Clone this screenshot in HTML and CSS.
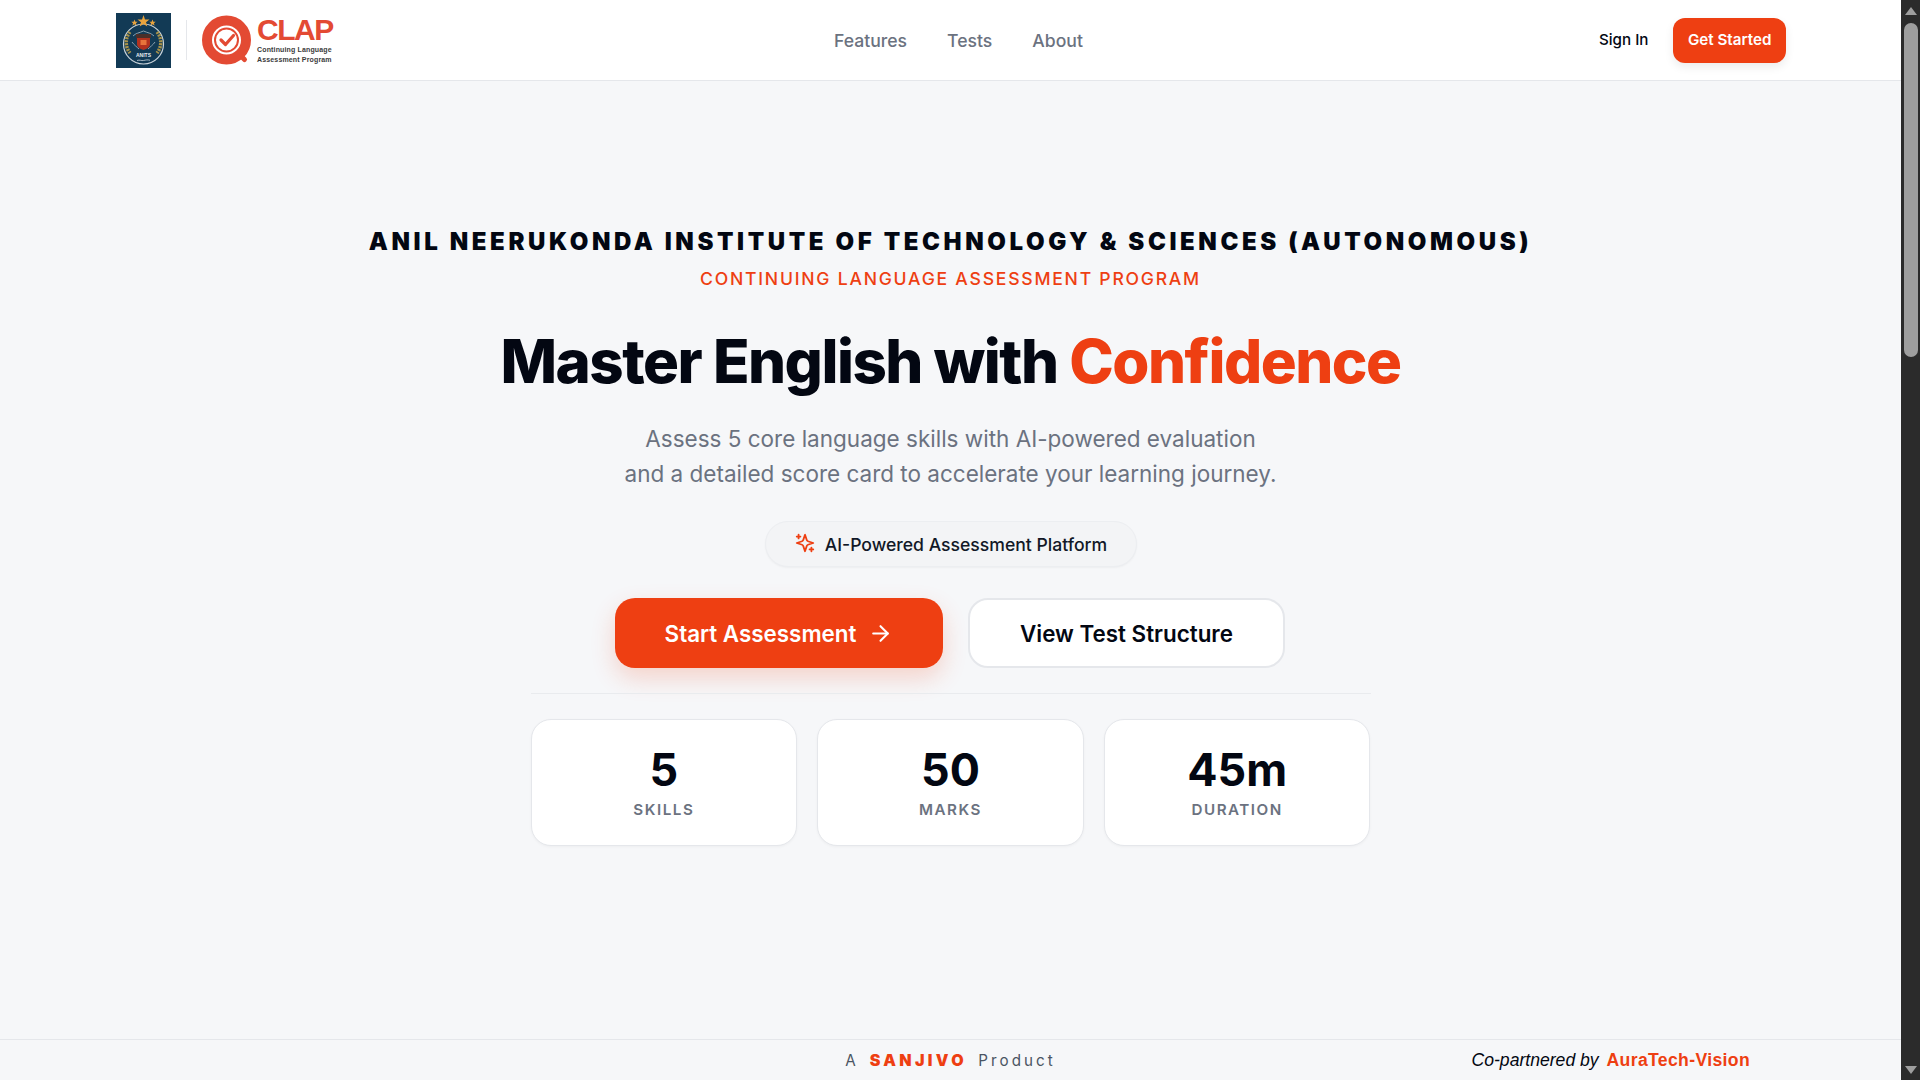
FILE: index.html
```html
<!DOCTYPE html>
<html lang="en">
<head>
    <meta charset="UTF-8">
    <meta name="viewport" content="width=device-width, initial-scale=1.0">
    <title>CLAP</title>
    <link rel="stylesheet" href="styles.css">
</head>
<body>
    <div class="page">
        <header class="topbar">
            <div class="brand">
                <svg class="emblem" width="55" height="55" viewBox="0 0 55 55">
                    <rect width="55" height="55" fill="#123a55"/>
                    <circle cx="27.500" cy="31" r="20" fill="none" stroke="#c9d3da" stroke-width="1.200"/>
                    <polygon points="27.500,2 29,6.500 33.500,6.500 30,9.300 31.300,13.500 27.500,11 23.700,13.500 25,9.300 21.500,6.500 26,6.500" fill="#e8a33d"/>
                    <polygon points="18.500,6.500 19.400,8.700 21.700,8.700 19.900,10.200 20.600,12.500 18.500,11.200 16.400,12.500 17.100,10.200 15.300,8.700 17.600,8.700" fill="#e8a33d"/>
                    <polygon points="36.500,6.500 37.400,8.700 39.700,8.700 37.900,10.200 38.600,12.500 36.500,11.200 34.400,12.500 35.100,10.200 33.300,8.700 35.600,8.700" fill="#e8a33d"/>
                    <path d="M14 19c-5 6-5 15 0 21M41 19c5 6 5 15 0 21" fill="none" stroke="#a8924a" stroke-width="3.500" stroke-dasharray="2 1"/>
                    <path d="M17 23c3-3 6-3 10.500-5 4.500 2 7.500 2 10.500 5M16 29c2 3 5 5 7 7M39 29c-2 3-5 5-7 7" fill="none" stroke="#8aa0ae" stroke-width="1"/>
                    <path d="M20 21h15v4H20z" fill="#4a2f2a"/>
                    <path d="M21 25h13v6c0 3-3 5-6.500 6-3.500-1-6.500-3-6.500-6z" fill="#b2321f"/>
                    <path d="M24.500 27h6v5h-6z" fill="#e8743b"/>
                    <text class="emblem-name" x="27.500" y="44" text-anchor="middle">ANITS</text>
                    <path d="M21 47.500c3-1 4 .5 6.500 0s4-1 6.500-.2" fill="none" stroke="#c9d3da" stroke-width=".8"/>
                </svg>
                <span class="brand-divider"></span>
                <div class="clap-logo">
                    <svg width="50" height="50" viewBox="0 0 50 50">
                        <path d="M37 39l5.500 5.500" stroke="#e34a33" stroke-width="5" stroke-linecap="round"/>
                        <circle cx="24.500" cy="25" r="19.500" fill="none" stroke="#e34a33" stroke-width="10"/>
                        <circle cx="24.500" cy="25" r="11.500" fill="none" stroke="#e34a33" stroke-width="2"/>
                        <path d="M19 25l4.500 4.500 8-9" fill="none" stroke="#e34a33" stroke-width="3.200" stroke-linecap="round" stroke-linejoin="round"/>
                    </svg>
                    <div class="clap-text">
                        <span class="clap-name">CLAP</span>
                        <span class="clap-sub">Continuing Language</span>
                        <span class="clap-sub">Assessment Program</span>
                    </div>
                </div>
            </div>
            <nav class="nav">
                <a href="#">Features</a>
                <a href="#">Tests</a>
                <a href="#">About</a>
            </nav>
            <div class="actions">
                <a class="signin" href="#">Sign In</a>
                <a class="getstarted" href="#">Get Started</a>
            </div>
        </header>

        <main class="hero">
            <h2 class="institute">ANIL NEERUKONDA INSTITUTE OF TECHNOLOGY &amp; SCIENCES (AUTONOMOUS)</h2>
            <p class="program">CONTINUING LANGUAGE ASSESSMENT PROGRAM</p>
            <h1 class="headline">Master English with <span>Confidence</span></h1>
            <p class="lead">Assess 5 core language skills with AI-powered evaluation<br>and a detailed score card to accelerate your learning journey.</p>
            <div class="pill">
                <svg class="spark" width="22" height="22" viewBox="0 0 24 24" fill="none" stroke="#ee3f12" stroke-width="2" stroke-linecap="round" stroke-linejoin="round">
                    <path d="m12 3-1.912 5.813a2 2 0 0 1-1.275 1.275L3 12l5.813 1.912a2 2 0 0 1 1.275 1.275L12 21l1.912-5.813a2 2 0 0 1 1.275-1.275L21 12l-5.813-1.912a2 2 0 0 1-1.275-1.275L12 3Z"/>
                    <path d="M5 3v4M19 17v4M3 5h4M17 19h4"/>
                </svg>
                AI-Powered Assessment Platform
            </div>
            <div class="cta">
                <a class="btn btn-primary" href="#">
                    Start Assessment
                    <svg width="25" height="25" viewBox="0 0 24 24" fill="none" stroke="#fff" stroke-width="2" stroke-linecap="round" stroke-linejoin="round"><path d="M5 12h14"/><path d="m12 5 7 7-7 7"/></svg>
                </a>
                <a class="btn btn-outline" href="#">View Test Structure</a>
            </div>
            <div class="stats">
                <div class="stat"><strong>5</strong><span>SKILLS</span></div>
                <div class="stat"><strong>50</strong><span>MARKS</span></div>
                <div class="stat"><strong>45m</strong><span>DURATION</span></div>
            </div>
        </main>

        <footer class="footer">
            <p class="product">A <b>SANJIVO</b> Product</p>
            <p class="partner"><i>Co-partnered by</i> <b>AuraTech-Vision</b></p>
        </footer>
    </div>

    <div class="scrollbar">
        <span class="arrow-up"></span>
        <span class="thumb"></span>
        <span class="arrow-down"></span>
    </div>
</body>
</html>
```

FILE: styles.css
```css
* {
    box-sizing: border-box;
}

html,
body {
    margin: 0;
    height: 100%;
    overflow: hidden;
}

body {
    display: flex;
    font-family: Inter, "Liberation Sans", sans-serif;
    background-color: #f6f7f9;
    color: #030712;
}

a {
    text-decoration: none;
    color: inherit;
}

.page {
    flex: 1;
    min-width: 0;
    height: 100vh;
    display: flex;
    flex-direction: column;
}

/* top bar */
.topbar {
    height: 81px;
    flex: none;
    background-color: #fff;
    border-bottom: 1px solid #e5e7eb;
    padding: 0 115px 0 116px;
    display: flex;
    align-items: center;
    justify-content: space-between;
}

.brand {
    display: flex;
    align-items: center;
    width: 218px;
}

.emblem {
    flex: none;
}

.emblem-name {
    font-family: "Liberation Sans", sans-serif;
    font-size: 5px;
    font-weight: 700;
    fill: #e6ecef;
}

.brand-divider {
    width: 1px;
    height: 40px;
    margin: 0 15px;
    background-color: #e5e7eb;
    flex: none;
}

.clap-logo {
    display: flex;
    align-items: center;
    gap: 5px;
    flex: none;
}

.clap-text {
    display: flex;
    flex-direction: column;
    font-family: "Liberation Sans", sans-serif;
}

.clap-name {
    font-size: 30px;
    line-height: 27px;
    font-weight: 700;
    letter-spacing: -1.5px;
    color: #e34a33;
    margin-bottom: 2px;
}

.clap-sub {
    font-size: 7px;
    line-height: 10px;
    font-weight: 700;
    letter-spacing: 0.15px;
    color: #3b3b3b;
    white-space: nowrap;
}

.nav {
    display: flex;
    gap: 40px;
    font-size: 17.6px;
    font-weight: 500;
    color: #6b7280;
}

.actions {
    display: flex;
    align-items: center;
    gap: 9px;
    font-size: 15.2px;
}

.signin {
    padding: 0 16px 1px;
    font-weight: 500;
}

.getstarted {
    height: 45px;
    padding: 0 14.5px 1px;
    display: flex;
    align-items: center;
    border-radius: 12px;
    background-color: #ee3f12;
    color: #fff;
    font-weight: 600;
    box-shadow: 0 4px 10px rgba(0, 0, 0, 0.08);
}

/* hero */
.hero {
    flex: 1;
    display: flex;
    flex-direction: column;
    align-items: center;
    padding-top: 145px;
}

.institute {
    margin: 0;
    font-size: 24px;
    line-height: 32px;
    font-weight: 900;
    letter-spacing: 0.15em;
    white-space: nowrap;
}

.program {
    margin: 9px 0 0;
    font-size: 17.6px;
    line-height: 24px;
    font-weight: 500;
    letter-spacing: 0.1em;
    color: #ee3f12;
}

.headline {
    margin: 36px 0 0;
    font-size: 60px;
    line-height: 68px;
    font-weight: 800;
    letter-spacing: -0.025em;
}

.headline span {
    color: #ee3f12;
}

.lead {
    margin: 26px 0 0;
    font-size: 22.5px;
    line-height: 35.2px;
    text-align: center;
    color: #6b7280;
}

.pill {
    margin-top: 30px;
    width: 372px;
    height: 46px;
    display: flex;
    align-items: center;
    justify-content: center;
    gap: 9px;
    border: 1px solid #eceef1;
    border-radius: 23px;
    background-color: #f3f4f6;
    font-size: 17.6px;
    font-weight: 500;
    color: #111827;
    box-shadow: 0 1px 2px rgba(0, 0, 0, 0.04);
}

.spark {
    margin-top: -3px;
}

.cta {
    margin-top: 31px;
    padding-right: 1px;
    display: flex;
    align-items: center;
    gap: 25px;
}

.btn {
    display: flex;
    align-items: center;
    justify-content: center;
    font-size: 22.4px;
    font-weight: 600;
}

.btn-primary {
    width: 328px;
    height: 70px;
    gap: 12px;
    border-radius: 20px;
    background-color: #ee3f12;
    color: #fff;
    box-shadow: 0 10px 25px rgba(238, 63, 18, 0.2);
}

.btn-outline {
    width: 317px;
    height: 70px;
    border-radius: 20px;
    border: 2px solid #e5e7eb;
    background-color: #fff;
}

.stats {
    margin-top: 25px;
    padding-top: 25px;
    width: 840px;
    border-top: 1px solid #e9ebee;
    display: grid;
    grid-template-columns: repeat(3, 1fr);
    gap: 20px;
}

.stat {
    height: 127px;
    display: flex;
    flex-direction: column;
    align-items: center;
    padding-top: 24px;
    background-color: #fff;
    border: 1px solid #e5e7eb;
    border-radius: 20px;
    box-shadow: 0 1px 3px rgba(0, 0, 0, 0.04);
}

.stat strong {
    font-size: 44.8px;
    line-height: 52px;
    font-weight: 700;
}

.stat span {
    margin-top: 4px;
    font-size: 15.2px;
    line-height: 20px;
    font-weight: 600;
    letter-spacing: 0.1em;
    color: #6b7280;
}

/* footer */
.footer {
    flex: none;
    height: 41px;
    border-top: 1px solid #e5e7eb;
    padding-right: 151px;
    display: grid;
    grid-template-columns: 1fr auto 1fr;
    align-items: center;
}

.product {
    grid-column: 2;
    margin: 0 0 0 151px;
    font-size: 15.2px;
    letter-spacing: 0.2em;
    color: #4b5563;
}

.product b {
    margin: 0 4px 0 3.6px;
    font-size: 16px;
    font-weight: 900;
    letter-spacing: 0.21em;
    color: #ee3f12;
}

.partner {
    grid-column: 3;
    justify-self: end;
    margin: 0;
    font-family: "Liberation Sans", sans-serif;
    font-size: 17.6px;
    white-space: nowrap;
}

.partner b {
    margin-left: 3px;
    letter-spacing: 0.02em;
    color: #ee3f12;
}

/* fake window scrollbar */
.scrollbar {
    width: 19px;
    height: 100vh;
    flex: none;
    display: flex;
    flex-direction: column;
    align-items: center;
    background-color: #2b2b2b;
}

.arrow-up,
.arrow-down {
    width: 0;
    height: 0;
    border-left: 6px solid transparent;
    border-right: 6px solid transparent;
}

.arrow-up {
    margin-top: 7px;
    border-bottom: 8px solid #9e9e9e;
}

.thumb {
    width: 14px;
    height: 334px;
    margin-top: 8px;
    border-radius: 7px;
    background-color: #9e9e9e;
}

.arrow-down {
    margin-top: auto;
    margin-bottom: 6px;
    border-top: 8px solid #9e9e9e;
}
```
